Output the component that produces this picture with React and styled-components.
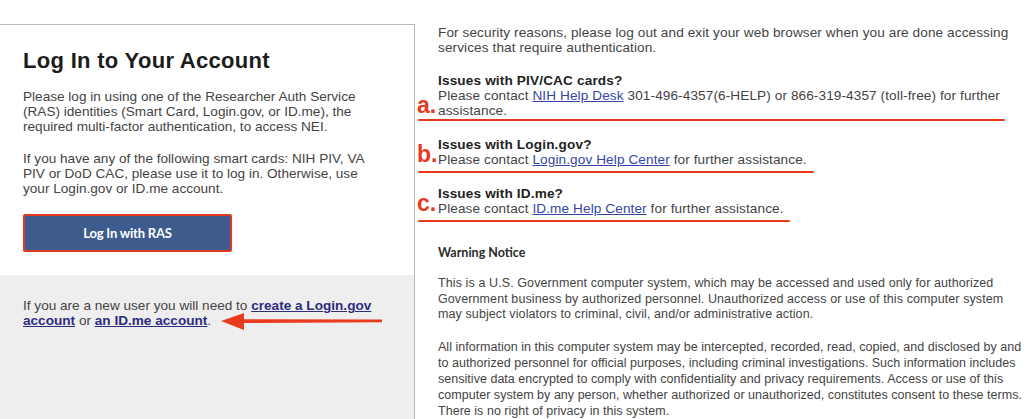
import styled, { createGlobalStyle } from 'styled-components';

const GlobalStyle = createGlobalStyle`
    html, body {
        margin: 0;
        padding: 0;
        background: #fff;
    }
    body {
        font-family: "Liberation Sans", Arial, sans-serif;
        color: #444;
        overflow: hidden;
    }
`

const Page = styled.div`
    display: flex;
    align-items: flex-start;
    padding-top: 24px;
    height: 395px;
`

const LoginPanel = styled.div`
    width: 414px;
    height: 100%;
    border-top: 1px solid #b9b9b9;
    border-right: 1px solid #b9b9b9;
    display: flex;
    flex-direction: column;
    flex-shrink: 0;
`

const LoginTop = styled.div`
    background: #fff;
    padding: 24px 36px 23px 23px;
`

const Heading = styled.h1`
    margin: 0 0 16px 0;
    font-size: 22px;
    line-height: 24px;
    font-weight: bold;
    letter-spacing: 0.3px;
    color: #1c1c1c;
    white-space: nowrap;
`

const Para = styled.p`
    margin: 0 0 17px 0;
    font-size: 13.6px;
    line-height: 15px;
`

const RasButton = styled.button`
    margin-top: 1px;
    width: 209px;
    height: 38px;
    background: #3d5b8c;
    border: 2px solid #e33a22;
    border-radius: 2px;
    color: #fff;
    font-family: Lato, "Liberation Sans", sans-serif;
    font-weight: bold;
    font-size: 13px;
    letter-spacing: -0.2px;
    cursor: pointer;
`

const NewUser = styled.div`
    position: relative;
    flex: 1;
    background: #eeeeee;
    padding: 23px 36px 0 23px;
    font-size: 13.6px;
    line-height: 15px;
`

const BoldLink = styled.a`
    color: #2c2c80;
    font-weight: bold;
    text-decoration: underline;
`

const Arrow = styled.svg`
    position: absolute;
    left: 218px;
    top: 34px;
`

const InfoColumn = styled.div`
    flex: 1;
    padding-left: 23px;
    padding-top: 1px;
    font-size: 13.6px;
    line-height: 15px;
    letter-spacing: 0.1px;
`

const Intro = styled.p`
    margin: 0 0 18px 0;
`

const Issue = styled.div`
    position: relative;
    padding-bottom: ${p => p.$pad}px;
    margin-bottom: ${p => p.$gap}px;

    &::after {
        content: "";
        position: absolute;
        left: -20px;
        bottom: -1px;
        width: ${p => p.$line}px;
        height: 2px;
        background: #e8391f;
        border-radius: 1px;
    }
`

const IssueTitle = styled.div`
    font-weight: bold;
    letter-spacing: 0.15px;
    color: #222;
`

const Marker = styled.span`
    position: absolute;
    left: -21px;
    bottom: ${p => p.$bottom}px;
    font-size: 23px;
    line-height: 23px;
    font-weight: bold;
    letter-spacing: 0;
    color: #e8391f;
`

const HelpLink = styled.a`
    color: #3346a8;
    text-decoration: underline;
`

const WarningTitle = styled.div`
    margin-top: 24px;
    font-family: Lato, "Liberation Sans", sans-serif;
    font-weight: bold;
    font-size: 12.5px;
    line-height: 15px;
    letter-spacing: 0;
    color: #2a2a2a;
`

const Notice = styled.p`
    margin: ${p => p.$top}px 0 0 0;
    font-size: 12.5px;
    line-height: ${p => p.$lh}px;
    letter-spacing: ${p => p.$ls}px;
    width: 590px;
`

function App() {
    return <>
        <GlobalStyle />
        <Page>
            <LoginPanel>
                <LoginTop>
                    <Heading>Log In to Your Account</Heading>
                    <Para>Please log in using one of the Researcher Auth Service (RAS) identities (Smart Card, Login.gov, or ID.me), the required multi-factor authentication, to access NEI.</Para>
                    <Para>If you have any of the following smart cards: NIH PIV, VA PIV or DoD CAC, please use it to log in. Otherwise, use your Login.gov or ID.me account.</Para>
                    <RasButton>Log In with RAS</RasButton>
                </LoginTop>
                <NewUser>
                    If you are a new user you will need to <BoldLink href="#">create a Login.gov account</BoldLink> or <BoldLink href="#">an ID.me account</BoldLink>.
                    <Arrow width="170" height="24" viewBox="0 0 170 24">
                        <path d="M164 10.5 L26 10.2 L26 4 L3 12 L26 21 L26 14 L164 13.2 Z" fill="#ea3a1f" />
                    </Arrow>
                </NewUser>
            </LoginPanel>
            <InfoColumn>
                <Intro>For security reasons, please log out and exit your web browser when you are done accessing services that require authentication.</Intro>
                <Issue $pad={2} $gap={17} $line={587}>
                    <IssueTitle>Issues with PIV/CAC cards?</IssueTitle>
                    Please contact <HelpLink href="#">NIH Help Desk</HelpLink> 301-496-4357(6-HELP) or 866-319-4357 (toll-free) for further assistance.
                    <Marker $bottom={3}>a.</Marker>
                </Issue>
                <Issue $pad={5} $gap={14} $line={396}>
                    <IssueTitle>Issues with Login.gov?</IssueTitle>
                    Please contact <HelpLink href="#">Login.gov Help Center</HelpLink> for further assistance.
                    <Marker $bottom={6}>b.</Marker>
                </Issue>
                <Issue $pad={5} $gap={0} $line={372}>
                    <IssueTitle>Issues with ID.me?</IssueTitle>
                    Please contact <HelpLink href="#">ID.me Help Center</HelpLink> for further assistance.
                    <Marker $bottom={6}>c.</Marker>
                </Issue>
                <WarningTitle>Warning Notice</WarningTitle>
                <Notice $top={16} $lh={15.5} $ls={0.1}>This is a U.S. Government computer system, which may be accessed and used only for authorized Government business by authorized personnel. Unauthorized access or use of this computer system may subject violators to criminal, civil, and/or administrative action.</Notice>
                <Notice $top={16} $lh={16} $ls={0.03}>All information in this computer system may be intercepted, recorded, read, copied, and disclosed by and to authorized personnel for official purposes, including criminal investigations. Such information includes sensitive data encrypted to comply with confidentiality and privacy requirements. Access or use of this computer system by any person, whether authorized or unauthorized, constitutes consent to these terms. There is no right of privacy in this system.</Notice>
            </InfoColumn>
        </Page>
    </>
}

export default App;
